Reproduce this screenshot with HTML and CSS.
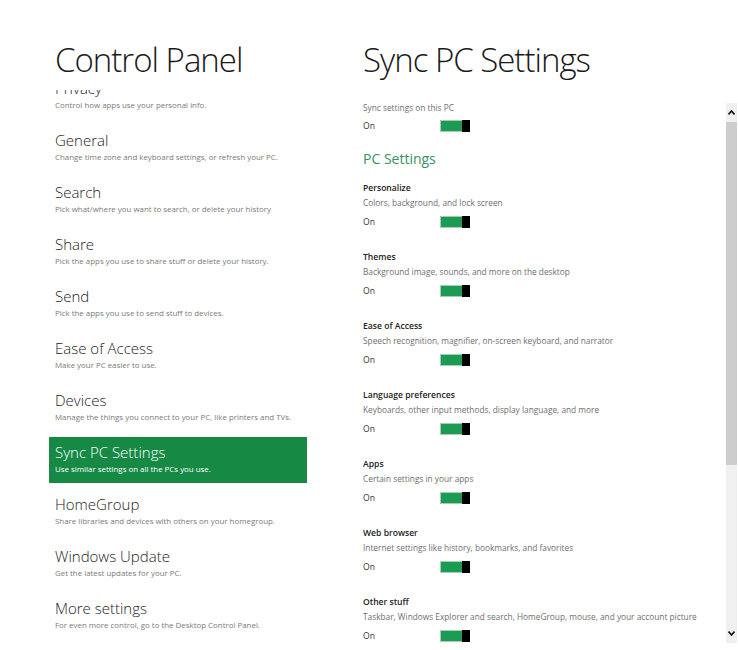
FILE: index.html
```html
<!DOCTYPE html>
<html lang="en">
<head>
    <meta charset="UTF-8">
    <meta name="viewport" content="width=device-width, initial-scale=1.0">
    <title>Sync PC Settings</title>
    <link rel="stylesheet" href="styles.css">
</head>
<body>

    <div class="screen">

        <!-- Left: control panel categories -->
        <div class="nav-column">
            <h1 class="page-title">Control Panel</h1>
            <div class="nav-clip">
                <ul class="nav-list">
                    <li class="nav-item"><span class="nav-title">Privacy</span><span class="nav-desc">Control how apps use your personal info.</span></li>
                    <li class="nav-item"><span class="nav-title">General</span><span class="nav-desc">Change time zone and keyboard settings, or refresh your PC.</span></li>
                    <li class="nav-item"><span class="nav-title">Search</span><span class="nav-desc">Pick what/where you want to search, or delete your history</span></li>
                    <li class="nav-item"><span class="nav-title">Share</span><span class="nav-desc">Pick the apps you use to share stuff or delete your history.</span></li>
                    <li class="nav-item"><span class="nav-title">Send</span><span class="nav-desc">Pick the apps you use to send stuff to devices.</span></li>
                    <li class="nav-item"><span class="nav-title">Ease of Access</span><span class="nav-desc">Make your PC easier to use.</span></li>
                    <li class="nav-item"><span class="nav-title">Devices</span><span class="nav-desc">Manage the things you connect to your PC, like printers and TVs.</span></li>
                    <li class="nav-item active"><span class="nav-title">Sync PC Settings</span><span class="nav-desc">Use similar settings on all the PCs you use.</span></li>
                    <li class="nav-item"><span class="nav-title">HomeGroup</span><span class="nav-desc">Share libraries and devices with others on your homegroup.</span></li>
                    <li class="nav-item"><span class="nav-title">Windows Update</span><span class="nav-desc">Get the latest updates for your PC.</span></li>
                    <li class="nav-item"><span class="nav-title">More settings</span><span class="nav-desc">For even more control, go to the Desktop Control Panel.</span></li>
                </ul>
            </div>
        </div>

        <!-- Right: sync settings -->
        <div class="detail-column">
            <h1 class="page-title">Sync PC Settings</h1>
            <div class="detail-body">
                <div class="settings">
                    <div class="setting-desc">Sync settings on this PC</div>
                    <div class="toggle-row">
                        <span class="toggle-label">On</span>
                        <span class="toggle"><span class="toggle-track"></span><span class="toggle-knob"></span></span>
                    </div>

                    <h2 class="section-title">PC Settings</h2>

                    <div class="setting">
                        <div class="setting-name">Personalize</div>
                        <div class="setting-desc">Colors, background, and lock screen</div>
                        <div class="toggle-row"><span class="toggle-label">On</span><span class="toggle"><span class="toggle-track"></span><span class="toggle-knob"></span></span></div>
                    </div>
                    <div class="setting">
                        <div class="setting-name">Themes</div>
                        <div class="setting-desc">Background image, sounds, and more on the desktop</div>
                        <div class="toggle-row"><span class="toggle-label">On</span><span class="toggle"><span class="toggle-track"></span><span class="toggle-knob"></span></span></div>
                    </div>
                    <div class="setting">
                        <div class="setting-name">Ease of Access</div>
                        <div class="setting-desc">Speech recognition, magnifier, on-screen keyboard, and narrator</div>
                        <div class="toggle-row"><span class="toggle-label">On</span><span class="toggle"><span class="toggle-track"></span><span class="toggle-knob"></span></span></div>
                    </div>
                    <div class="setting">
                        <div class="setting-name">Language preferences</div>
                        <div class="setting-desc">Keyboards, other input methods, display language, and more</div>
                        <div class="toggle-row"><span class="toggle-label">On</span><span class="toggle"><span class="toggle-track"></span><span class="toggle-knob"></span></span></div>
                    </div>
                    <div class="setting">
                        <div class="setting-name">Apps</div>
                        <div class="setting-desc">Certain settings in your apps</div>
                        <div class="toggle-row"><span class="toggle-label">On</span><span class="toggle"><span class="toggle-track"></span><span class="toggle-knob"></span></span></div>
                    </div>
                    <div class="setting">
                        <div class="setting-name">Web browser</div>
                        <div class="setting-desc">Internet settings like history, bookmarks, and favorites</div>
                        <div class="toggle-row"><span class="toggle-label">On</span><span class="toggle"><span class="toggle-track"></span><span class="toggle-knob"></span></span></div>
                    </div>
                    <div class="setting">
                        <div class="setting-name">Other stuff</div>
                        <div class="setting-desc">Taskbar, Windows Explorer and search, HomeGroup, mouse, and your account picture</div>
                        <div class="toggle-row"><span class="toggle-label">On</span><span class="toggle"><span class="toggle-track"></span><span class="toggle-knob"></span></span></div>
                    </div>
                </div>

                <!-- Scrollbar for the settings pane -->
                <div class="scrollbar">
                    <div class="scroll-btn">
                        <svg width="7" height="5" viewBox="0 0 7 5"><path d="M0.5 4.5 L3.5 1 L6.5 4.5" fill="none" stroke="#111" stroke-width="1.6"/></svg>
                    </div>
                    <div class="scroll-thumb"></div>
                    <div class="scroll-track"></div>
                    <div class="scroll-btn">
                        <svg width="7" height="5" viewBox="0 0 7 5"><path d="M0.5 0.5 L3.5 4 L6.5 0.5" fill="none" stroke="#111" stroke-width="1.6"/></svg>
                    </div>
                </div>
            </div>
        </div>

    </div>

</body>
</html>
```

FILE: styles.css
```css
html, body {
    margin: 0;
    height: 100%;
    overflow: hidden;
    background: #fff;
}
body {
    font-family: "Open Sans", "Noto Sans", sans-serif;
    color: #222;
}
.screen {
    display: flex;
    height: 650px;
}

/* Titles */
.page-title {
    margin: 0;
    padding-top: 38px;
    font-size: 33px;
    font-weight: 300;
    line-height: 44px;
    color: #1a1a1a;
    letter-spacing: -1px;
}

/* Left column */
.nav-column {
    width: 314px;
    padding-left: 49px;
    display: flex;
    flex-direction: column;
}
.nav-column .page-title {
    padding-left: 6px;
}
.nav-clip {
    margin-top: 8px;
    flex: 1;
    overflow: hidden;
}
.nav-list {
    list-style: none;
    margin: -17px 0 0 0;
    padding: 0;
    width: 258px;
}
.nav-item {
    display: flex;
    flex-direction: column;
    padding: 5px 6px 8px;
    margin-bottom: 6px;
}
.nav-title {
    font-size: 15px;
    font-weight: 300;
    line-height: 20px;
    color: #222;
}
.nav-desc {
    margin-top: 1px;
    font-size: 7.9px;
    line-height: 12px;
    color: #7a7a7a;
    white-space: nowrap;
}
.nav-item.active {
    background: #168a45;
}
.nav-item.active .nav-title,
.nav-item.active .nav-desc {
    color: #fff;
}

/* Right column */
.detail-column {
    flex: 1;
    display: flex;
    flex-direction: column;
}
.detail-body {
    margin-top: 18px;
    display: flex;
    height: 550px;
}
.settings {
    flex: 1;
    overflow: hidden;
    padding-top: 2px;
}
.setting-desc {
    font-size: 8.3px;
    line-height: 12px;
    color: #6e6e6e;
    white-space: nowrap;
}
.setting-name {
    font-size: 8.6px;
    font-weight: 600;
    line-height: 12px;
    color: #222;
}
.setting {
    margin-bottom: 22px;
}
.setting .setting-desc {
    margin-top: 3px;
}
.toggle-row {
    display: flex;
    align-items: center;
    height: 14px;
    margin-top: 5px;
}
.setting .toggle-row {
    margin-top: 6px;
}
.toggle-label {
    width: 77px;
    font-size: 8.6px;
    color: #333;
}
.toggle {
    display: flex;
    width: 30px;
    height: 12px;
}
.toggle-track {
    flex: 1;
    background: #1c9b55;
    border: 1px solid #a9cdb4;
    border-right: none;
}
.toggle-knob {
    width: 8px;
    background: #000;
}
.section-title {
    margin: 16px 0 13px;
    font-size: 14px;
    font-weight: 400;
    line-height: 20px;
    color: #3a9064;
}

/* Scrollbar */
.scrollbar {
    width: 11px;
    margin: 3px 1px 7px 0;
    display: flex;
    flex-direction: column;
    background: #f0f0f0;
}
.scroll-btn {
    height: 19px;
    display: flex;
    align-items: center;
    justify-content: center;
}
.scroll-thumb {
    height: 343px;
    background: #cdcdcd;
}
.scroll-track {
    flex: 1;
}
```
